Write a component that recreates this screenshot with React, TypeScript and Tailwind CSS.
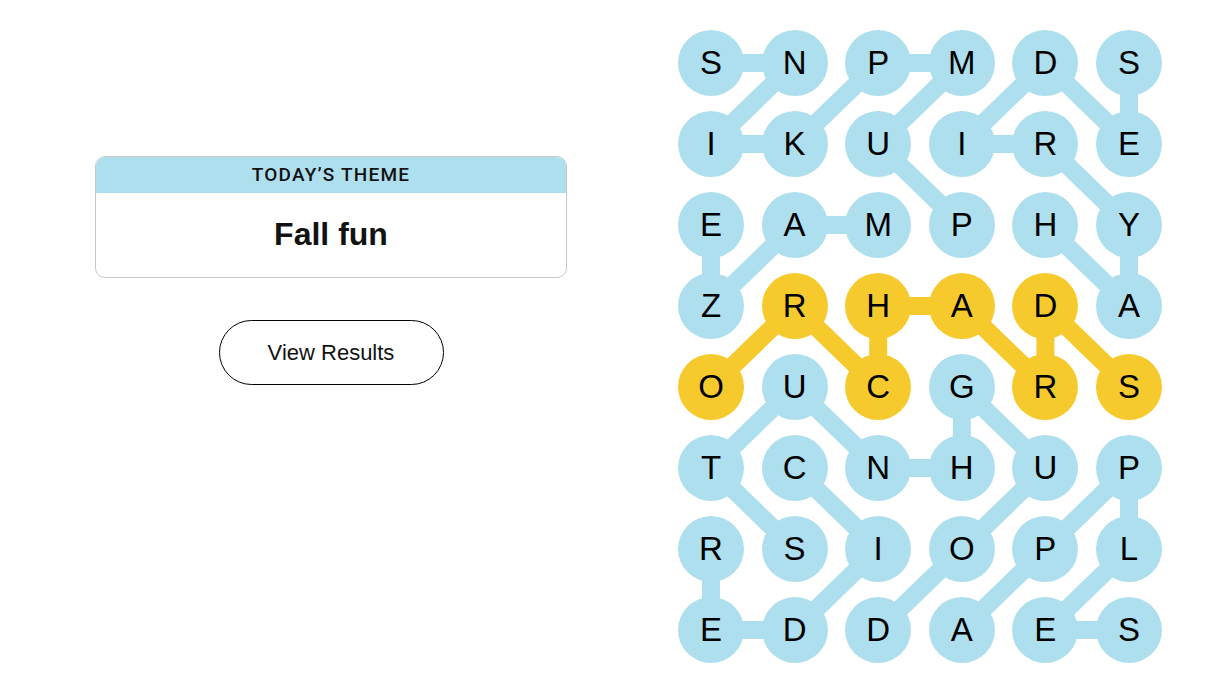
import React from 'react';

const GRID = [
  'SNPMDS',
  'IKUIRE',
  'EAMPHY',
  'ZRHADA',
  'OUCGRS',
  'TCNHUP',
  'RSIOPL',
  'EDDAES',
];

const BLUE = '#aedfee';
const YELLOW = '#f6ca2c';

// each found word as a path of [col, row]
const WORDS: { color: string; path: [number, number][] }[] = [
  { color: BLUE, path: [[3, 2], [2, 1], [3, 0], [2, 0], [1, 1], [0, 1], [1, 0], [0, 0]] },
  { color: BLUE, path: [[4, 2], [5, 3], [5, 2], [4, 1], [3, 1], [4, 0], [5, 1], [5, 0]] },
  { color: BLUE, path: [[2, 2], [1, 2], [0, 3], [0, 2]] },
  { color: YELLOW, path: [[0, 4], [1, 3], [2, 4], [2, 3], [3, 3], [4, 4], [4, 3], [5, 4]] },
  { color: BLUE, path: [[2, 7], [3, 6], [4, 5], [3, 4], [3, 5], [2, 5], [1, 4], [0, 5], [1, 6]] },
  { color: BLUE, path: [[1, 5], [2, 6], [1, 7], [0, 7], [0, 6]] },
  { color: BLUE, path: [[3, 7], [4, 6], [5, 5], [5, 6], [4, 7], [5, 7]] },
];

const COL = 83.6;
const ROW = 81;
const R = 33;

const cellColor: Record<string, string> = {};
WORDS.forEach((w) => w.path.forEach(([c, r]) => (cellColor[`${c}-${r}`] = w.color)));

function Board() {
  return (
    <div className="relative">
      <svg className="absolute left-0 top-0" width={484} height={633}>
        {WORDS.map((w, i) =>
          w.path.slice(1).map(([c, r], j) => {
            const [pc, pr] = w.path[j];
            return (
              <line
                key={`${i}-${j}`}
                x1={R + pc * COL}
                y1={R + pr * ROW}
                x2={R + c * COL}
                y2={R + r * ROW}
                stroke={w.color}
                strokeWidth={18}
              />
            );
          })
        )}
      </svg>
      <div className="relative grid grid-cols-[repeat(6,66px)] gap-x-[17.6px] gap-y-[15px]">
        {GRID.map((row, r) =>
          row.split('').map((ch, c) => (
            <div
              key={`${c}-${r}`}
              className={`flex h-[66px] w-[66px] items-center justify-center rounded-full text-[33px] text-black ${
                cellColor[`${c}-${r}`] === YELLOW ? 'bg-[#f6ca2c]' : 'bg-[#aedfee]'
              }`}
            >
              {ch}
            </div>
          ))
        )}
      </div>
    </div>
  );
}

export default function App() {
  return (
    <div
      className="flex h-[691px] w-[1228px] bg-white pl-[95px] pt-[30px]"
      style={{ fontFamily: '"Liberation Sans", Arial, sans-serif' }}
    >
      <div className="mt-[126px] flex w-[472px] flex-col items-center">
        <div className="w-full overflow-hidden rounded-[10px] border border-[#c8c8c8]">
          <div className="flex h-[36px] items-center justify-center bg-[#aedfee] font-['Roboto',sans-serif] text-[19px] font-medium uppercase tracking-[1.2px] text-[#121212]">
            Today’s Theme
          </div>
          <div className="flex h-[84px] items-center justify-center pb-[2px] text-[32px] font-bold text-[#121212]">
            Fall fun
          </div>
        </div>
        <button className="mt-[42px] flex h-[65px] w-[225px] items-center justify-center rounded-full border border-black text-[22px] text-[#121212]">
          View Results
        </button>
      </div>
      <div className="ml-[111px]">
        <Board />
      </div>
    </div>
  );
}
